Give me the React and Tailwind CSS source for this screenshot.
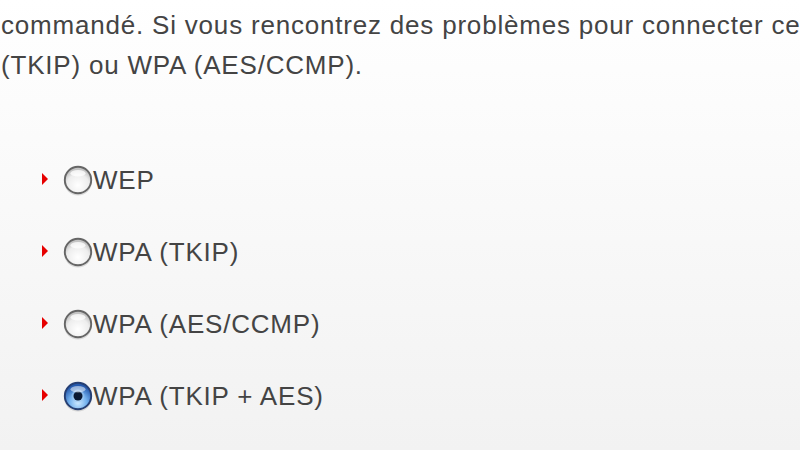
import React from "react";

const options = [
  { id: "wep", label: "WEP" },
  { id: "tkip", label: "WPA (TKIP)" },
  { id: "aes", label: "WPA (AES/CCMP)" },
  { id: "both", label: "WPA (TKIP + AES)" },
];

const Radio = ({ checked }) => (
  <svg width="30" height="31" viewBox="0 0 30 31" className="shrink-0">
    <defs>
      <radialGradient id="off" cx="50%" cy="70%" r="60%">
        <stop offset="0%" stopColor="#ffffff" />
        <stop offset="70%" stopColor="#ededed" />
        <stop offset="100%" stopColor="#c4c4c4" />
      </radialGradient>
      <radialGradient id="on" cx="50%" cy="75%" r="65%">
        <stop offset="0%" stopColor="#cfeaff" />
        <stop offset="50%" stopColor="#74b2ee" />
        <stop offset="100%" stopColor="#2559ad" />
      </radialGradient>
    </defs>
    <circle cx="15" cy="16.5" r="14" fill="#000" opacity="0.12" />
    <circle
      cx="15"
      cy="15"
      r="13.2"
      fill={checked ? "url(#on)" : "url(#off)"}
      stroke={checked ? "#263f73" : "#666666"}
      strokeWidth="1.9"
    />
    {checked && <circle cx="15" cy="15" r="6.4" fill="#9fc8f0" opacity="0.6" />}
    {checked && <circle cx="15" cy="15" r="4.5" fill="#0b1a33" />}
    <ellipse cx="15" cy="8.3" rx="7.5" ry="3.2" fill="#fff" opacity={checked ? 0.5 : 0.75} />
  </svg>
);

export default function App() {
  return (
    <div
      className="w-[800px] h-[450px] overflow-hidden bg-gradient-to-b from-[#ffffff] to-[#f2f2f2] text-[#444444] text-[26px] tracking-[0.8px]"
      style={{ fontFamily: '"Liberation Sans", Arial, sans-serif' }}
    >
      <div className="pt-[5px] pl-[1px] leading-[40px] whitespace-nowrap">
        <p>commandé. Si vous rencontrez des problèmes pour connecter ce</p>
        <p>(TKIP) ou WPA (AES/CCMP).</p>
      </div>

      <ul className="mt-[59px] pl-[42px]">
        {options.map((o) => (
          <li key={o.id} className="flex items-center h-[72px]">
            <span className="w-0 h-0 border-y-[6px] border-y-transparent border-l-[6px] border-l-[#e60000] mr-[15px] -mt-[2px]" />
            <Radio checked={o.id === "both"} />
            <span className="leading-[30px]">{o.label}</span>
          </li>
        ))}
      </ul>
    </div>
  );
}
